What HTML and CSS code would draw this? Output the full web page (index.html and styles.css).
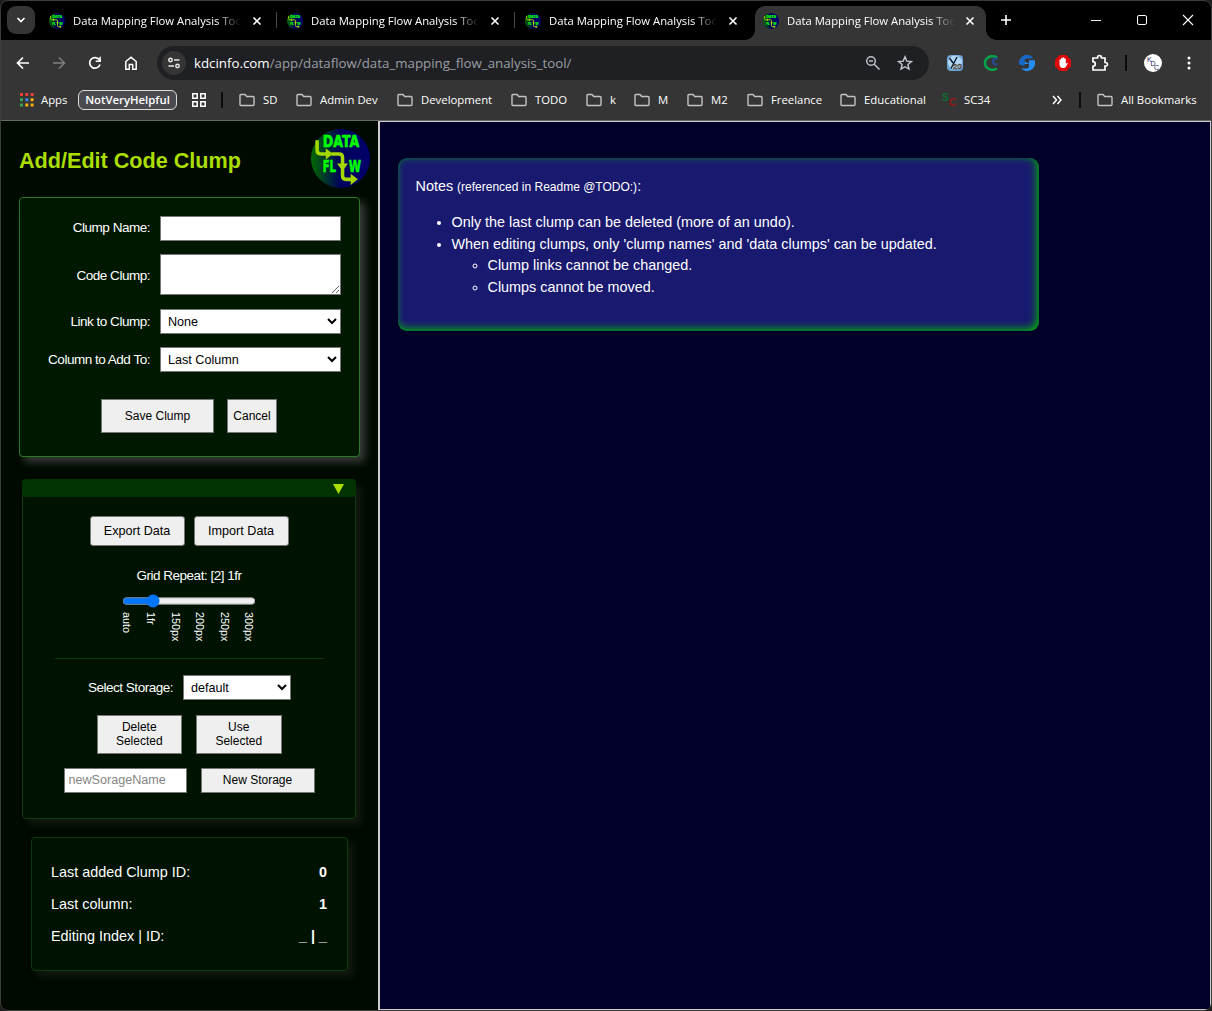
FILE: index.html
```html
<!DOCTYPE html>
<html lang="en">
<head>
<meta charset="utf-8">
<title>Data Mapping Flow Analysis Tool</title>
<link rel="stylesheet" href="styles.css">
</head>
<body>
<svg class="defs" width="0" height="0" aria-hidden="true">
  <defs>
    <linearGradient id="disc" x1="0" y1="0" x2="1" y2="0"><stop offset="0" stop-color="#006a00"/><stop offset=".5" stop-color="#00005a"/><stop offset="1" stop-color="#00006c"/></linearGradient>
    <symbol id="logo" viewBox="0 0 58 58">
      <circle cx="29" cy="29" r="29" fill="url(#disc)"/>
      <text x="11.500" y="18" class="logo-text" textLength="36" lengthAdjust="spacingAndGlyphs">DATA</text>
      <text x="11.500" y="42" class="logo-text" textLength="13" lengthAdjust="spacingAndGlyphs">FL</text>
      <text x="37" y="42" class="logo-text" textLength="12" lengthAdjust="spacingAndGlyphs">W</text>
      <path d="M6 11V21q0 3.500 3.500 3.500H15M20 24.500h7.500q3.500 0 3.500 3.500v18q0 3.500 3.500 3.500H40" fill="none" stroke="#a4d800" stroke-width="3.500"/>
      <path d="M14.500 19l7 5.500-7 5.500zM25.500 34h11L31 41zM39 44l7 5.500-7 5.500z" fill="#a4d800"/>
    </symbol>
    <symbol id="folder" viewBox="0 0 16 14"><path d="M1 11.500v-9q0-1 1-1h4l1.700 2H14q1 0 1 1v7q0 1-1 1H2q-1 0-1-1z" fill="none" stroke="#c4c4c4" stroke-width="1.400"/></symbol>
    <symbol id="x" viewBox="0 0 16 16"><path d="M4.500 4.500l7 7M11.500 4.500l-7 7" stroke="#fff" stroke-width="1.600"/></symbol>
  </defs>
</svg>
<div class="window">
  <div class="tabstrip">
    <div class="tab-search"><svg width="10" height="8" viewBox="0 0 10 8"><path d="M1.500 2l3.500 3.500L8.500 2" fill="none" stroke="#fff" stroke-width="1.700"/></svg></div>
    <div class="tab"><svg class="fav"><use href="#logo"/></svg><span class="tab-title">Data Mapping Flow Analysis Tool</span><svg class="x"><use href="#x"/></svg><i class="tab-sep"></i></div>
    <div class="tab"><svg class="fav"><use href="#logo"/></svg><span class="tab-title">Data Mapping Flow Analysis Tool</span><svg class="x"><use href="#x"/></svg><i class="tab-sep"></i></div>
    <div class="tab"><svg class="fav"><use href="#logo"/></svg><span class="tab-title">Data Mapping Flow Analysis Tool</span><svg class="x"><use href="#x"/></svg></div>
    <div class="tab tab-active"><svg class="fav"><use href="#logo"/></svg><span class="tab-title">Data Mapping Flow Analysis Tool</span><svg class="x"><use href="#x"/></svg></div>
    <svg class="new-tab" width="12" height="12" viewBox="0 0 12 12"><path d="M6 1v10M1 6h10" stroke="#fff" stroke-width="1.600"/></svg>
    <div class="controls">
      <svg width="12" height="12" viewBox="0 0 12 12"><path d="M1 6.500h10" stroke="#fff"/></svg>
      <svg width="12" height="12" viewBox="0 0 12 12"><rect x="1.500" y="1.500" width="9" height="9" rx="1.500" fill="none" stroke="#fff"/></svg>
      <svg width="12" height="12" viewBox="0 0 12 12"><path d="M1 1l10 10M11 1L1 11" stroke="#fff" stroke-width="1.100"/></svg>
    </div>
  </div>

  <div class="toolbar">
    <div class="nav">
      <svg width="16" height="16" viewBox="0 0 16 16"><path d="M14 8H3M8 2.500L2.500 8 8 13.500" fill="none" stroke="#fff" stroke-width="1.700"/></svg>
      <svg width="16" height="16" viewBox="0 0 16 16"><path d="M2 8h11M8 2.500L13.500 8 8 13.500" fill="none" stroke="#808080" stroke-width="1.500"/></svg>
      <svg width="16" height="16" viewBox="0 0 16 16"><path d="M13 9.500A5.300 5.300 0 1 1 12.300 4.800L13 6" fill="none" stroke="#fff" stroke-width="1.700"/><path d="M13.900 1.800v5.200H8.700V5.400h3.600V1.800z" fill="#fff"/></svg>
      <svg width="16" height="16" viewBox="0 0 16 16"><path d="M2.800 14.200V6.500L8 2.300l5.200 4.200v7.700H9.700V9.500H6.300v4.700z" fill="none" stroke="#fff" stroke-width="1.500"/></svg>
    </div>
    <div class="omnibox">
      <span class="site"><svg width="14" height="14" viewBox="0 0 14 14"><g fill="none" stroke="#e8e8e8" stroke-width="1.500"><circle cx="3.500" cy="4" r="1.700"/><path d="M7 4h5.500M1.500 10H7"/><circle cx="10.500" cy="10" r="1.700"/></g></svg></span>
      <span class="url"><b>kdcinfo.com</b>/app/dataflow/data_mapping_flow_analysis_tool/</span>
      <svg width="16" height="16" viewBox="0 0 16 16"><g fill="none" stroke="#bdc1c6" stroke-width="1.500"><circle cx="6" cy="6" r="4.300"/><path d="M9.200 9.200l5.300 5.300M4 6h4"/></g></svg>
      <svg width="16" height="16" viewBox="0 0 16 16"><path d="M8 1.800l1.800 4.300 4.700.4-3.600 3 1.100 4.600L8 11.700l-4 2.400 1.100-4.600-3.600-3 4.700-.4z" fill="none" stroke="#c6c9cd" stroke-width="1.400"/></svg>
    </div>
    <div class="exts">
      <svg width="16" height="16" viewBox="0 0 16 16"><rect width="16" height="16" rx="4" fill="#6ea6d8"/><circle cx="8" cy="7.500" r="7" fill="#b3d8f5"/><path d="M2.500 3l3.500 5M10 2L4 13.500" stroke="#10233a" stroke-width="1.500" fill="none"/><text x="6" y="14" class="mini-badge" textLength="9">20</text></svg>
      <svg width="16" height="16" viewBox="0 0 16 16"><path d="M14 2.500C8-1 2 3 2 8s6 9 12 5.500" fill="none" stroke="#00a34a" stroke-width="2.600"/><path d="M14.500 4q-4-1.500-4.500 2t4.500 3.500" fill="none" stroke="#25489a" stroke-width="2"/></svg>
      <svg width="16" height="16" viewBox="0 0 16 16"><path d="M13.500 2.200A8 8 0 0 0 .1 9.500L5.500 11V6.500Q5.500 3.500 8.500 3.500h5.500z" fill="#1668c4"/><path d="M5.500 6.500v2.500h4.500v2q0 2-2 2.500H2.300A8 8 0 0 0 15.900 6.500V5.200H10v3.300z" fill="#248cf2"/></svg>
      <svg width="16" height="16" viewBox="0 0 16 16"><path d="M4.700 0h6.600L16 4.700v6.600L11.300 16H4.700L0 11.300V4.700z" fill="#e00909"/><path d="M4.500 8.500V4.800q.8-1 1.500 0V3.300q.8-1 1.600 0V2.700q.8-.8 1.600 0v1q.8-.8 1.600.2v5l1.200-1.200q1-.2.700.7l-2 3.500Q10 13 8.300 13 4.500 13 4.500 9z" fill="#fff"/></svg>
      <svg width="18" height="18" viewBox="0 0 18 18"><path d="M2 4h4.500q0-2.500 2-2.500t2 2.500H14v4.500q2.500 0 2.500 1.800T14 12v4H2v-3.700q2.300-.3 2.300-2.300T2 7.700z" fill="none" stroke="#fff" stroke-width="1.700"/></svg>
      <i class="bar"></i>
      <svg width="18" height="18" viewBox="0 0 18 18"><circle cx="9" cy="9" r="9" fill="#fff"/><g class="monogram"><text x="3" y="8">K</text><text x="6.500" y="12">D</text><text x="10" y="16">C</text></g></svg>
      <svg width="4" height="16" viewBox="0 0 4 16"><g fill="#fff"><circle cx="2" cy="3" r="1.500"/><circle cx="2" cy="8" r="1.500"/><circle cx="2" cy="13" r="1.500"/></g></svg>
    </div>
  </div>

  <div class="bookmarks">
    <div class="bm bm-apps"><svg width="14" height="14" viewBox="0 0 14 14"><path d="M0 0h3v3H0zM5.300 0h3v3h-3zM10.600 0h3v3h-3z" fill="#ea4335"/><path d="M0 5.300h3v3H0zM0 10.600h3v3H0z" fill="#34a853"/><path d="M5.300 5.300h3v3h-3z" fill="#4285f4"/><path d="M10.600 5.300h3v3h-3zM5.300 10.600h3v3h-3zM10.600 10.600h3v3h-3z" fill="#fbb00a"/></svg>Apps</div>
    <div class="chip">NotVeryHelpful</div>
    <svg class="grid-icon" width="14" height="14" viewBox="0 0 14 14"><path d="M.8.800h4.400v4.400H.8zM8.800.800h4.400v4.400H8.800zM.8 8.800h4.400v4.400H.8zM8.800 8.800h4.400v4.400H8.800z" fill="none" stroke="#fff" stroke-width="1.500"/></svg>
    <i class="bar"></i>
    <div class="bm w-sd"><svg class="folder"><use href="#folder"/></svg>SD</div>
    <div class="bm w-admin"><svg class="folder"><use href="#folder"/></svg>Admin Dev</div>
    <div class="bm w-dev"><svg class="folder"><use href="#folder"/></svg>Development</div>
    <div class="bm w-todo"><svg class="folder"><use href="#folder"/></svg>TODO</div>
    <div class="bm w-k"><svg class="folder"><use href="#folder"/></svg>k</div>
    <div class="bm w-m"><svg class="folder"><use href="#folder"/></svg>M</div>
    <div class="bm w-m2"><svg class="folder"><use href="#folder"/></svg>M2</div>
    <div class="bm w-free"><svg class="folder"><use href="#folder"/></svg>Freelance</div>
    <div class="bm w-edu"><svg class="folder"><use href="#folder"/></svg>Educational</div>
    <div class="bm bm-sc"><svg width="16" height="14" viewBox="0 0 16 14"><text x="0" y="8" class="sc-s">S</text><text x="7" y="13" class="sc-c">C</text></svg>SC34</div>
    <svg class="more" width="10" height="10" viewBox="0 0 10 10"><path d="M1 1l3.500 4L1 9M5.500 1L9 5 5.500 9" fill="none" stroke="#fff" stroke-width="1.500"/></svg>
    <i class="bar bar-end"></i>
    <div class="bm"><svg class="folder"><use href="#folder"/></svg>All Bookmarks</div>
  </div>

  <div class="page">
    <aside class="sidebar">
      <header class="head"><h1>Add/Edit Code Clump</h1><svg class="logo"><use href="#logo"/></svg></header>

      <form class="card form">
        <label for="name">Clump Name:</label><input id="name" class="ctl" type="text">
        <label for="code">Code Clump:</label><textarea id="code" class="ctl"></textarea>
        <label for="link">Link to Clump:</label><select id="link" class="ctl"><option>None</option></select>
        <label for="col">Column to Add To:</label><select id="col" class="ctl"><option>Last Column</option></select>
        <div class="actions"><button type="button" class="btn save">Save Clump</button><button type="button" class="btn cancel">Cancel</button></div>
      </form>

      <section class="card tools">
        <div class="tools-head"><svg width="11" height="10" viewBox="0 0 11 10"><path d="M0 0h11L5.500 10z" fill="#aadd00"/></svg></div>
        <div class="row data-row"><button class="btn data-btn">Export Data</button><button class="btn data-btn">Import Data</button></div>
        <div class="label repeat">Grid Repeat: [2] 1fr</div>
        <input class="slider" type="range" min="0" max="5" value="1">
        <div class="ticks"><span>auto</span><span>1fr</span><span>150px</span><span>200px</span><span>250px</span><span>300px</span></div>
        <hr>
        <div class="row storage-row"><label for="store">Select Storage:</label><select id="store" class="ctl"><option>default</option></select></div>
        <div class="row pick-row"><button class="btn">Delete<br>Selected</button><button class="btn">Use<br>Selected</button></div>
        <div class="row new-row"><input class="ctl" type="text" placeholder="newSorageName"><button class="btn">New Storage</button></div>
      </section>

      <section class="card stats">
        <div><span>Last added Clump ID:</span><b>0</b></div>
        <div><span>Last column:</span><b>1</b></div>
        <div><span>Editing Index | ID:</span><b>_ | _</b></div>
      </section>
    </aside>
    <main class="main">
      <section class="notes">
        <p>Notes <small>(referenced in Readme @TODO:)</small>:</p>
        <ul>
          <li>Only the last clump can be deleted (more of an undo).</li>
          <li>When editing clumps, only 'clump names' and 'data clumps' can be updated.
            <ul><li>Clump links cannot be changed.</li><li>Clumps cannot be moved.</li></ul>
          </li>
        </ul>
      </section>
    </main>
  </div>
</div>
</body>
</html>
```
FILE: styles.css
```css
* { box-sizing: border-box; }
body { margin: 0; background: #1c1c1c; font-family: "Liberation Sans", Arial, sans-serif; color: #fff; overflow: hidden; }
svg { flex: none; display: block; }
.defs { position: absolute; }
.window { width: 1212px; height: 1011px; border: 1px solid #3c3c3c; border-radius: 8px; background: #353535; overflow: hidden; display: flex; flex-direction: column; }

/* tab strip */
.tabstrip { height: 39px; flex: none; background: #000; display: flex; font: 11.3px "Open Sans", "Noto Sans", sans-serif; }
.tab-search { width: 28px; height: 28px; margin: 5px 6px 0 6px; border-radius: 9px; background: #353535; display: flex; align-items: center; justify-content: center; }
.tab { width: 238px; height: 34px; margin-top: 5px; padding: 0 0 5px 8px; display: flex; align-items: center; gap: 8px; position: relative; }
.tab .fav { width: 16px; height: 16px; }
.tab .x { width: 16px; height: 16px; }
.tab-title { width: 168px; overflow: hidden; white-space: nowrap; mask-image: linear-gradient(90deg, #000 144px, transparent 168px); }
.tab-sep { position: absolute; left: 235px; top: 6px; width: 1px; height: 16px; background: #4a4a4a; }
.tab-active { width: 231px; background: #353535; border-radius: 10px 10px 0 0; }
.tab-active .x { margin-left: -1px; }
.tab-active::before, .tab-active::after { content: ""; position: absolute; bottom: 0; width: 10px; height: 10px; }
.tab-active::before { left: -10px; background: radial-gradient(circle at 0 0, #000 9.5px, #353535 10px); }
.tab-active::after { right: -10px; background: radial-gradient(circle at 100% 0, #000 9.5px, #353535 10px); }
.new-tab { margin: 13px 0 0 14px; }
.controls { display: flex; gap: 34px; margin: 13px 0 0 78px; }
.logo-text { font: 900 15px "DejaVu Sans", sans-serif; fill: #00ff00; stroke: #00ff00; stroke-width: .6px; }

/* toolbar */
.toolbar { height: 46px; flex: none; display: flex; align-items: center; }
.nav { display: flex; gap: 20px; margin-left: 14px; width: 142px; }
.omnibox { width: 772px; height: 34px; border-radius: 17px; background: #1f2024; display: flex; align-items: center; gap: 16px; padding: 0 16px 0 5px; }
.site { width: 24px; height: 24px; border-radius: 50%; background: #353535; display: flex; align-items: center; justify-content: center; }
.url { flex: 1; margin-left: -8px; font: 13.3px "Open Sans", "Noto Sans", sans-serif; color: #9a9ea3; }
.url b { font-weight: 400; color: #fff; }
.exts { display: flex; align-items: center; gap: 20px; margin-left: 18px; }
.exts svg:nth-child(5) { margin-right: -4px; }
.exts .bar + svg { margin-left: -3px; }
.exts svg:last-child { margin-left: 5px; }
.mini-badge { font: bold 8px "Liberation Sans", sans-serif; fill: #b9a36a; stroke: #223; stroke-width: .4px; }
.monogram { font: 7px "Liberation Sans", sans-serif; fill: #1c1c66; }
.bar { width: 2px; height: 16px; background: #0b0b0b; flex: none; }

/* bookmarks bar */
.bookmarks { height: 34px; flex: none; padding: 0 0 7px 19px; display: flex; align-items: center; font: 11.35px "Open Sans", "Noto Sans", sans-serif; white-space: nowrap; }
.bm { display: flex; align-items: center; gap: 8px; flex: none; }
.bm-apps { width: 58px; gap: 7px; }
.folder { width: 16px; height: 14px; }
.chip { width: 99px; height: 20px; border: 1px solid #dcdcdc; border-radius: 6px; background: #4a4b50; font-weight: 600; line-height: 17px; text-align: center; }
.grid-icon { margin: 0 15px 0 15px; }
.bookmarks .bar { margin-right: 16px; }
.w-sd { width: 57px; } .w-admin { width: 101px; } .w-dev { width: 114px; } .w-todo { width: 75px; }
.w-k { width: 48px; } .w-m { width: 53px; } .w-m2 { width: 60px; } .w-free { width: 93px; } .w-edu { width: 102px; }
.bm-sc { width: 110px; gap: 6px; }
.sc-s { font: bold 10px "Liberation Sans", sans-serif; fill: #0b6b36; }
.sc-c { font: bold 10px "Liberation Sans", sans-serif; fill: #981414; }
.more { margin-right: 17px; }

/* page */
.page { flex: 1; min-height: 0; display: flex; border-top: 1px solid #696969; }
.sidebar { width: 377px; flex: none; background: #000a00; display: flex; flex-direction: column; }
.main { flex: 1; background: #000028; border: 1px solid #ccc; border-left-width: 2px; padding: 36px 18px; }
.head { display: flex; justify-content: space-between; height: 76px; padding: 8px 8px 0 18px; }
h1 { margin: 19px 0 0; font-size: 21.6px; line-height: 26px; color: #aadd00; white-space: nowrap; }
.logo { width: 59px; height: 59px; }
.card { border: 1px solid #103810; border-radius: 4px; background: #001200; box-shadow: 6px 6px 7px #10190f; }
.form { width: 341px; height: 260px; margin-left: 18px; border-color: #2d772d; background: #001700; box-shadow: 5px 5px 8px #3a3d3a; padding: 18px 18px 0 0; display: grid; grid-template-columns: 130px 181px; grid-template-rows: 25px 42px 25px 25px 34px; row-gap: 13px; column-gap: 10px; align-items: center; }
label, .label { font-size: 13.5px; letter-spacing: -.48px; white-space: nowrap; }
.form label { text-align: right; }
.form label:first-child { margin-top: -2px; }
.ctl { width: 100%; height: 100%; margin: 0; border: 1px solid #767676; border-radius: 0; background: #fff; color: #000; font: 12.6px "Liberation Sans", Arial, sans-serif; display: block; }
textarea.ctl { padding: 0; height: 41px; align-self: start; }
select.ctl { padding: 0 0 0 3px; }
.actions { grid-column: 1 / 3; margin: 14px 0 -14px; height: 34px; display: flex; gap: 13px; padding-left: 81px; }
.btn { border: 1px solid #767676; border-radius: 0; background: #efefef; color: #000; font: 12px/14px "Liberation Sans", Arial, sans-serif; padding: 0; margin: 0; }
.save { width: 113px; } .cancel { width: 50px; }
.tools { width: 334px; height: 340px; margin: 22px 0 0 21px; display: flex; flex-direction: column; align-items: center; }
.tools-head { width: 334px; height: 18px; margin-top: -1px; flex: none; background: #003300; border-radius: 4px; display: flex; justify-content: flex-end; padding: 5px 12px 0 0; }
.row { display: flex; align-items: center; flex: none; }
.data-row { margin-top: 19px; height: 30px; gap: 9px; }
.data-btn { width: 95px; height: 30px; border-radius: 3px; font-size: 12.6px; }
.repeat { margin-top: 22px; line-height: 16px; }
.slider { zoom: .9; width: 149px; height: 16px; margin: 11px 0 0; accent-color: #0075ff; }
.ticks { width: 134px; height: 34px; margin: 4px 2px 0 0; display: flex; justify-content: space-between; flex: none; }
.ticks span { writing-mode: vertical-rl; font-size: 10.8px; line-height: 12px; width: 12px; }
hr { width: 269px; margin: 12px 0 0; border: 0; border-top: 1px solid #0a3a0a; }
.storage-row { margin: 16px 0 0 1px; height: 25px; gap: 10px; }
.storage-row select { width: 108px; }
.pick-row { margin-top: 15px; height: 39px; gap: 14px; }
.pick-row .btn { width: 85.500px; height: 39px; padding-bottom: 2px; }
.new-row { margin-top: 14px; height: 25px; gap: 14px; }
.new-row input { width: 123px; padding: 0 4px 2px; }
.new-row input::placeholder { color: #858585; }
.new-row .btn { width: 114px; height: 25px; padding-bottom: 2px; }
.stats { width: 317px; height: 134px; margin: 18px 0 0 30px; padding: 18px 20px 0 19px; font-size: 14.4px; line-height: 32px; }
.stats div { display: flex; justify-content: space-between; }

/* notes */
.notes { width: 641px; height: 173px; border-radius: 9px; background: #191970; box-shadow: inset -2px -2px 9px #00b400; padding: 17.500px 18px 0 17.500px; font-size: 14.4px; line-height: 21.6px; }
.notes p { margin: 0 0 14px; }
.notes small { font-size: 12px; }
.notes ul { margin: 0; padding-left: 36px; }
```
